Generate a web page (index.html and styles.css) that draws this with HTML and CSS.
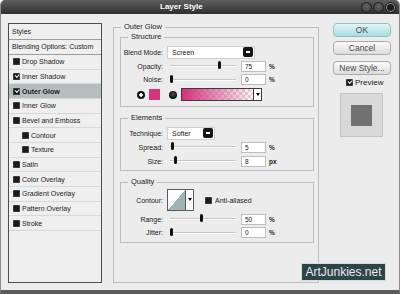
FILE: index.html
```html
<!DOCTYPE html>
<html>
<head>
<link rel="stylesheet" href="styles.css">
</head>
<body>
  <div class="window">
    <div class="titlebar">
      <span class="title">Layer Style</span>
      <div class="winbtns"><i></i><i></i><i class="close"></i></div>
    </div>
    <div class="dialog">
      <ul class="stylelist">
        <li class="head">Styles</li>
        <li class="head">Blending Options: Custom</li>
        <li><span class="chk"></span>Drop Shadow</li>
        <li><span class="chk on"></span>Inner Shadow</li>
        <li class="sel"><span class="chk on"></span>Outer Glow</li>
        <li><span class="chk"></span>Inner Glow</li>
        <li><span class="chk"></span>Bevel and Emboss</li>
        <li class="sub"><span class="chk"></span>Contour</li>
        <li class="sub"><span class="chk"></span>Texture</li>
        <li><span class="chk"></span>Satin</li>
        <li><span class="chk"></span>Color Overlay</li>
        <li><span class="chk"></span>Gradient Overlay</li>
        <li><span class="chk"></span>Pattern Overlay</li>
        <li><span class="chk"></span>Stroke</li>
      </ul>

      <fieldset class="group">
        <legend>Outer Glow</legend>

        <fieldset class="box structure">
          <legend>Structure</legend>
          <div class="row first">
            <span class="lbl">Blend Mode:</span>
            <div class="select blend">Screen<span class="drop"></span></div>
          </div>
          <div class="row">
            <span class="lbl">Opacity:</span>
            <div class="slider"><span class="thumb" style="left: 48px"></span></div>
            <input class="num" type="text" value="75" readonly>
            <span class="unit">%</span>
          </div>
          <div class="row short">
            <span class="lbl">Noise:</span>
            <div class="slider"><span class="thumb" style="left: 0px"></span></div>
            <input class="num" type="text" value="0" readonly>
            <span class="unit">%</span>
          </div>
          <div class="row colors">
            <span class="radio on"></span>
            <span class="swatch"></span>
            <span class="radio"></span>
            <div class="gradient"><span class="ramp"></span><span class="arrow"></span></div>
          </div>
        </fieldset>

        <fieldset class="box elements">
          <legend>Elements</legend>
          <div class="row first">
            <span class="lbl">Technique:</span>
            <div class="select technique">Softer<span class="drop"></span></div>
          </div>
          <div class="row">
            <span class="lbl">Spread:</span>
            <div class="slider"><span class="thumb" style="left: 1px"></span></div>
            <input class="num" type="text" value="5" readonly>
            <span class="unit">%</span>
          </div>
          <div class="row">
            <span class="lbl">Size:</span>
            <div class="slider"><span class="thumb" style="left: 4px"></span></div>
            <input class="num" type="text" value="8" readonly>
            <span class="unit">px</span>
          </div>
        </fieldset>

        <fieldset class="box quality">
          <legend>Quality</legend>
          <div class="row contour-row">
            <span class="lbl">Contour:</span>
            <div class="contour"><span class="curve"></span><span class="arrow"></span></div>
            <span class="chk aa"></span>
            <span class="aa-text">Anti-aliased</span>
          </div>
          <div class="row range">
            <span class="lbl">Range:</span>
            <div class="slider"><span class="thumb" style="left: 30px"></span></div>
            <input class="num" type="text" value="50" readonly>
            <span class="unit">%</span>
          </div>
          <div class="row short">
            <span class="lbl">Jitter:</span>
            <div class="slider"><span class="thumb" style="left: 0px"></span></div>
            <input class="num" type="text" value="0" readonly>
            <span class="unit">%</span>
          </div>
        </fieldset>
      </fieldset>

      <div class="actions">
        <div class="btn ok">OK</div>
        <div class="btn cancel">Cancel</div>
        <div class="btn newstyle">New Style...</div>
        <div class="preview-chk"><span class="chk on"></span>Preview</div>
        <div class="preview"><span class="sample"></span></div>
      </div>
    </div>
    <div class="watermark">ArtJunkies.net</div>
  </div>
</body>
</html>
```

FILE: styles.css
```css
body{
  margin: 0;
  background-color: #ffffff;
  font-family: "Liberation Sans", Arial, sans-serif;
  font-size: 7px;
  color: #222222;
}

.window{
  position: relative;
  width: 400px;
  height: 294px;
  box-sizing: border-box;
  background-color: #ececec;
  border-left: 1px solid #8c8c8c;
  border-right: 1px solid #8c8c8c;
  border-bottom: 4px solid #5c5c5c;
  border-radius: 5px 5px 0 0;
  overflow: hidden;
}

/* title bar */
.titlebar{
  height: 14px;
  display: flex;
  align-items: center;
  background: linear-gradient(#5e5e5e, #2f2f2f);
}

.title{
  margin-left: 159px;
  color: #ffffff;
  font-size: 8px;
  font-weight: bold;
  line-height: 14px;
}

.winbtns{
  margin-left: auto;
  margin-right: 3px;
  display: flex;
  gap: 1px;
}

.winbtns i{
  width: 9px;
  height: 9px;
  border-radius: 50%;
  border: 1px solid #222222;
  background: radial-gradient(circle at 50% 35%, #666666, #363636);
}

.winbtns i.close{
  background: #1c1c1c;
  box-shadow: inset 0 0 0 1px #9a9a9a;
}

/* dialog body */
.dialog{
  height: 276px;
  box-sizing: border-box;
  display: flex;
  padding: 8px 8px 7px 7px;
}

/* styles list */
.stylelist{
  width: 94px;
  margin: 1px 0 0 0;
  padding: 0;
  list-style: none;
  box-sizing: border-box;
  border: 1px solid #4e4e4e;
  background-color: #efefef;
}

.stylelist li{
  height: 13.67px;
  display: flex;
  align-items: center;
  padding-left: 4px;
  border-bottom: 1px solid #d8d8d8;
  white-space: nowrap;
}

.stylelist li.head{
  height: 14.5px;
  padding-left: 3px;
  border-bottom: 1px solid #9c9c9c;
}

.stylelist li.sub{
  padding-left: 13px;
}

.stylelist li.sel{
  background-color: #b6bebf;
  font-weight: bold;
}

.chk{
  position: relative;
  width: 7px;
  height: 7px;
  margin-right: 2px;
  border-radius: 1.5px;
  background-color: #1b1b1b;
  box-shadow: inset 0 0 0 1px #3a3a3a;
  flex: none;
}

.chk.on::after{
  content: "";
  position: absolute;
  left: 1.5px;
  top: 1px;
  width: 3px;
  height: 1.5px;
  border-left: 1px solid #ffffff;
  border-bottom: 1px solid #ffffff;
  transform: rotate(-45deg);
}

/* group boxes */
fieldset{
  margin: 0;
  min-width: 0;
  border: 1px solid #bdbdbd;
}

legend{
  padding: 0 3px;
  font-size: 7.5px;
  line-height: 10px;
}

.group{
  width: 206px;
  box-sizing: border-box;
  margin-left: 11px;
  padding: 0 4px 0 6px;
}

.group > legend{
  margin-left: 1px;
}

.box{
  padding: 0 4px;
}

.box > legend{
  margin-left: 3px;
}

.structure{
  padding-bottom: 4px;
}

.elements{
  margin-top: 6px;
  padding-bottom: 2px;
}

.quality{
  margin-top: 6px;
  padding-bottom: 3px;
}

.row{
  height: 14px;
  display: flex;
  align-items: center;
}

.row.first{
  margin-top: 3px;
}

.row.short{
  height: 13px;
}

.lbl{
  width: 38px;
  margin-right: 4px;
  display: flex;
  justify-content: flex-end;
  white-space: nowrap;
  flex: none;
}

.select{
  position: relative;
  height: 13px;
  box-sizing: border-box;
  display: flex;
  align-items: center;
  padding-left: 4px;
  background-color: #ffffff;
  border: 1px solid #d0d0d0;
}

.select.blend{
  width: 88px;
}

.select.technique{
  width: 48px;
}

.drop{
  position: relative;
  width: 10px;
  height: 10px;
  margin-left: auto;
  margin-right: 1px;
  border-radius: 2px;
  background-color: #151515;
}

.drop::after{
  content: "";
  position: absolute;
  left: 3px;
  top: 4px;
  width: 4px;
  height: 2px;
  background-color: #ffffff;
}

.slider{
  position: relative;
  width: 66px;
  height: 1px;
  margin-left: 3px;
  background-color: #c6c6c6;
  border-bottom: 1px solid #ffffff;
}

.thumb{
  position: absolute;
  top: -4px;
  width: 3px;
  height: 8px;
  border-radius: 1.5px;
  background-color: #111111;
}

.num{
  width: 25px;
  height: 11px;
  box-sizing: border-box;
  margin: 0 0 0 5px;
  padding: 0 0 0 3px;
  border: 1px solid #bdbdbd;
  background-color: #ffffff;
  font-family: "Liberation Sans", Arial, sans-serif;
  font-size: 6.5px;
  color: #222222;
}

.unit{
  margin-left: 3px;
  font-weight: bold;
  font-size: 6.5px;
}

.row.colors{
  height: 15px;
  margin-top: 1px;
  padding-left: 12px;
}

.radio{
  width: 8px;
  height: 8px;
  border-radius: 50%;
  background: radial-gradient(circle at 50% 40%, #555555, #111111 60%);
}

.radio.on{
  background: radial-gradient(circle, #ffffff 0 1.5px, #111111 2px);
}

.swatch{
  width: 11px;
  height: 11px;
  margin-left: 4px;
  background-color: #d5357d;
}

.swatch + .radio{
  margin-left: 9px;
}

.gradient{
  width: 81px;
  height: 13px;
  box-sizing: border-box;
  margin-left: 4px;
  display: flex;
  border: 1px solid #3c3c3c;
}

.ramp{
  flex: 1;
  background: linear-gradient(to right, #d3317b, rgba(222, 80, 150, 0.05)),
    repeating-conic-gradient(#ffffff 0 25%, #dcdcdc 0 50%) 0 0 / 6px 6px;
}

.arrow{
  position: relative;
  width: 7px;
  border-left: 1px solid #3c3c3c;
  background-color: #ffffff;
}

.arrow::after{
  content: "";
  position: absolute;
  left: 1.5px;
  top: 4px;
  border-top: 3px solid #000000;
  border-left: 2px solid transparent;
  border-right: 2px solid transparent;
}

.row.contour-row{
  height: 22px;
  margin-top: 2px;
}

.contour{
  width: 27px;
  height: 22px;
  box-sizing: border-box;
  display: flex;
  border: 1px solid #5a5a5a;
}

.curve{
  flex: 1;
  background: linear-gradient(to top left, #a1b3b6 50%, #ffffff 50%);
}

.contour .arrow{
  border-left-color: #5a5a5a;
}

.contour .arrow::after{
  top: 8px;
}

.chk.aa{
  margin-left: 11px;
  margin-right: 3px;
}

.row.range{
  margin-top: 1px;
}

/* buttons column */
.actions{
  width: 58px;
  margin-left: 14px;
  padding-top: 1px;
  display: flex;
  flex-direction: column;
}

.btn{
  height: 14px;
  box-sizing: border-box;
  border: 1px solid #acacac;
  border-radius: 4px;
  background: linear-gradient(#fbfbfb, #dcdcdc);
  text-align: center;
  font-size: 8.5px;
  line-height: 12px;
  color: #4a4a4a;
}

.btn.ok{
  border-color: #8fc3c8;
  background: linear-gradient(#e2f6f8, #a8dce1);
}

.btn.cancel{
  margin-top: 4px;
}

.btn.newstyle{
  margin-top: 6px;
}

.preview-chk{
  height: 9px;
  margin-top: 3px;
  padding-left: 13px;
  display: flex;
  align-items: center;
  font-size: 8px;
}

.preview{
  width: 43px;
  height: 44px;
  box-sizing: border-box;
  margin: 6px 0 0 7px;
  display: flex;
  align-items: center;
  justify-content: center;
  background-color: #d9d9d9;
  border: 1px solid #c4c4c4;
}

.sample{
  width: 21px;
  height: 21px;
  background-color: #717171;
}

/* watermark stamped over the dialog */
.watermark{
  position: absolute;
  left: 300px;
  top: 263px;
  width: 85px;
  height: 18px;
  box-sizing: border-box;
  border: 1px solid #d6dcdc;
  background-color: #2d4448;
  color: #e8eeee;
  font-size: 12px;
  line-height: 16px;
  text-align: center;
}
```
